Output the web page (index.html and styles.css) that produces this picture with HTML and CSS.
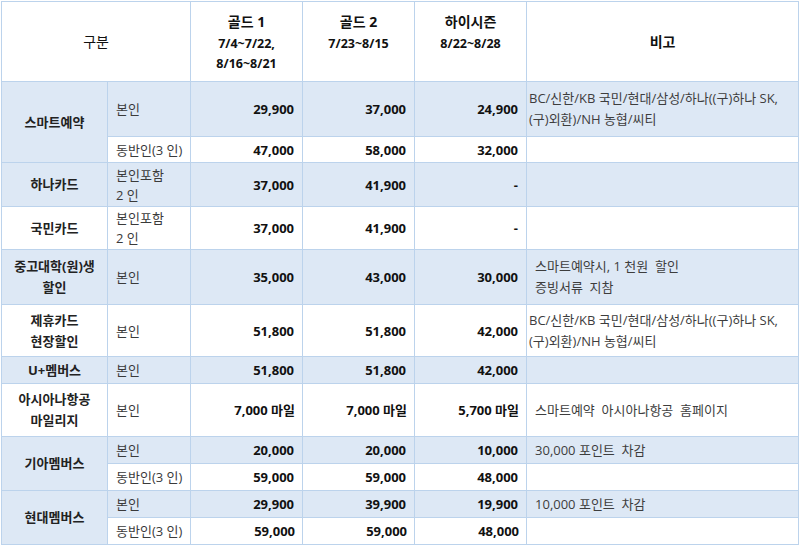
FILE: index.html
```html
<!DOCTYPE html>
<html lang="ko">
<head>
<meta charset="utf-8">
<link rel="stylesheet" href="styles.css">
</head>
<body>
<div class="page">
<table class="fare">
  <colgroup>
    <col class="c-group"><col class="c-sub"><col class="c-num"><col class="c-num"><col class="c-num"><col class="c-note">
  </colgroup>
  <thead>
    <tr class="h-head">
      <th colspan="2" class="mid plain">구분</th>
      <th class="top"><div class="ttl">골드 1</div><div class="dt">7/4~7/22,<br>8/16~8/21</div></th>
      <th class="top"><div class="ttl">골드 2</div><div class="dt">7/23~8/15</div></th>
      <th class="top"><div class="ttl">하이시즌</div><div class="dt">8/22~8/28</div></th>
      <th class="mid">비고</th>
    </tr>
  </thead>
  <tbody>
    <tr class="blue h55">
      <td rowspan="2" class="grp blue">스마트예약</td>
      <td class="sub">본인</td>
      <td class="num">29,900</td><td class="num">37,000</td><td class="num">24,900</td>
      <td class="note tight"><span class="nw">BC/신한/KB 국민/현대/삼성/하나((구)하나 SK,</span><br>(구)외환)/NH 농협/씨티</td>
    </tr>
    <tr class="h26">
      <td class="sub">동반인(3 인)</td>
      <td class="num">47,000</td><td class="num">58,000</td><td class="num">32,000</td>
      <td class="note"></td>
    </tr>
    <tr class="blue h44">
      <td class="grp">하나카드</td>
      <td class="sub">본인포함<br>2 인</td>
      <td class="num">37,000</td><td class="num">41,900</td><td class="num">-</td>
      <td class="note"></td>
    </tr>
    <tr class="h43">
      <td class="grp">국민카드</td>
      <td class="sub">본인포함<br>2 인</td>
      <td class="num">37,000</td><td class="num">41,900</td><td class="num">-</td>
      <td class="note"></td>
    </tr>
    <tr class="blue h55">
      <td class="grp">중고대학(원)생<br>할인</td>
      <td class="sub">본인</td>
      <td class="num">35,000</td><td class="num">43,000</td><td class="num">30,000</td>
      <td class="note">스마트예약시, 1 천원 &nbsp;할인<br>증빙서류 &nbsp;지참</td>
    </tr>
    <tr class="h52">
      <td class="grp">제휴카드<br>현장할인</td>
      <td class="sub">본인</td>
      <td class="num">51,800</td><td class="num">51,800</td><td class="num">42,000</td>
      <td class="note tight"><span class="nw">BC/신한/KB 국민/현대/삼성/하나((구)하나 SK,</span><br>(구)외환)/NH 농협/씨티</td>
    </tr>
    <tr class="blue h27">
      <td class="grp">U+멤버스</td>
      <td class="sub">본인</td>
      <td class="num">51,800</td><td class="num">51,800</td><td class="num">42,000</td>
      <td class="note"></td>
    </tr>
    <tr class="h53">
      <td class="grp">아시아나항공<br>마일리지</td>
      <td class="sub">본인</td>
      <td class="num near">7,000 마일</td><td class="num near">7,000 마일</td><td class="num near">5,700 마일</td>
      <td class="note">스마트예약 &nbsp;아시아나항공 &nbsp;홈페이지</td>
    </tr>
    <tr class="blue h27">
      <td rowspan="2" class="grp blue">기아멤버스</td>
      <td class="sub">본인</td>
      <td class="num">20,000</td><td class="num">20,000</td><td class="num">10,000</td>
      <td class="note">30,000 포인트 &nbsp;차감</td>
    </tr>
    <tr class="h27">
      <td class="sub">동반인(3 인)</td>
      <td class="num">59,000</td><td class="num">59,000</td><td class="num">48,000</td>
      <td class="note"></td>
    </tr>
    <tr class="blue h27">
      <td rowspan="2" class="grp blue">현대멤버스</td>
      <td class="sub">본인</td>
      <td class="num">29,900</td><td class="num">39,900</td><td class="num">19,900</td>
      <td class="note">10,000 포인트 &nbsp;차감</td>
    </tr>
    <tr class="h27">
      <td class="sub">동반인(3 인)</td>
      <td class="num near">59,000</td><td class="num near">59,000</td><td class="num near">48,000</td>
      <td class="note"></td>
    </tr>
  </tbody>
</table>
</div>
</body>
</html>
```

FILE: styles.css
```css
html, body {
  margin: 0;
  padding: 0;
  background: #ffffff;
}

.page {
  padding: 1px 0 0 1px;
}

.fare {
  border-collapse: collapse;
  table-layout: fixed;
  width: 797px;
  font-family: "Open Sans", "Noto Sans CJK KR", sans-serif;
  font-size: 13px;
  line-height: 20px;
  color: #111;
}

.c-group { width: 106px; }
.c-sub { width: 83px; }
.c-num { width: 112px; }
.c-note { width: 272px; }

.fare th,
.fare td {
  border: 1px solid #bcd3ec;
  padding: 0 8px;
  vertical-align: middle;
}

.h-head { height: 80px; }
.h-head th { font-weight: 700; text-align: center; }
.h-head th.top { vertical-align: top; padding-top: 8px; }
.h-head th.plain { font-weight: 400; font-size: 13.5px; }
.h-head th.mid { font-size: 14px; }
.ttl { font-size: 14px; line-height: 24px; }
.dt { font-size: 12.5px; line-height: 20px; }

.h55 { height: 55px; }
.h52 { height: 52px; }
.h53 { height: 53px; }
.h44 { height: 44px; }
.h43 { height: 43px; }
.h27 { height: 27px; }
.h26 { height: 26px; }

.blue td, td.blue { background: #dde8f5; }

.grp {
  text-align: center;
  font-weight: 700;
  color: #222;
  padding: 0 4px;
  line-height: 21px;
}

.sub {
  text-align: left;
  color: #3a3a3a;
  line-height: 20px;
  padding: 0 0 0 7px;
  white-space: nowrap;
  overflow: hidden;
}

.num {
  text-align: right;
  font-weight: 700;
  color: #111;
  padding-right: 10px;
  line-height: 20px;
}

.num.near { padding-right: 7px; }

.note {
  text-align: left;
  color: #3d3d3d;
  font-size: 13px;
  line-height: 21px;
  padding-left: 7px;
}

.note.tight {
  padding-left: 2px;
  padding-right: 0;
}

.nw { white-space: nowrap; }
```
